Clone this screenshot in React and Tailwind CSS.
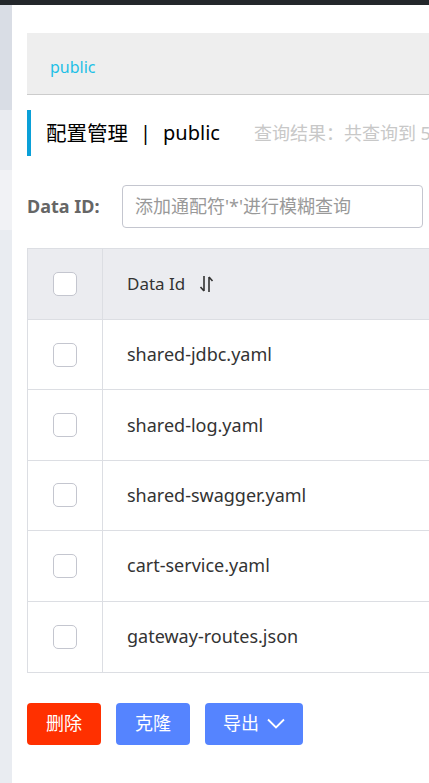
const rows = [
  "shared-jdbc.yaml",
  "shared-log.yaml",
  "shared-swagger.yaml",
  "cart-service.yaml",
  "gateway-routes.json",
];

function Checkbox() {
  return (
    <span className="block w-6 h-6 rounded-[5px] border border-[#c4c6cf] bg-white"></span>
  );
}

function SortIcon() {
  return (
    <svg width="16" height="20" viewBox="0 0 16 20" className="ml-[14px]">
      <path d="M5 2v15M5 17L1.5 13" stroke="#333" strokeWidth="1.6" fill="none" />
      <path d="M10 18V3M10 3l3.5 4" stroke="#333" strokeWidth="1.6" fill="none" />
    </svg>
  );
}

export default function App() {
  return (
    <div
      className="w-[429px] h-[783px] overflow-hidden bg-white flex flex-col"
      style={{ fontFamily: '"Noto Sans", "Noto Sans CJK SC", sans-serif' }}
    >
      <div className="h-[5px] bg-[#23272b] shrink-0"></div>
      <div className="flex flex-1 min-h-0">
        {/* Left strip */}
        <div className="w-3 shrink-0 flex flex-col bg-[#e9ecf1]">
          <div className="h-[105px] bg-[#d9dde5]"></div>
          <div className="h-[60px] bg-[#e9ebf0]"></div>
          <div className="h-[60px] bg-[#f1f2f5]"></div>
        </div>

        {/* Main */}
        <div className="flex-1 min-w-0 pl-[15px] pt-7">
          <div className="h-[62px] bg-[#eeeeee] border-b border-[#cccccc] flex items-center pl-[23px] pt-[7px] w-[600px]">
            <span className="text-[16px] text-[#1ec0e6]">public</span>
          </div>

          <div className="mt-[15px] h-[46px] border-l-4 border-[#0aa0d8] flex items-center pl-[15px] whitespace-nowrap">
            <span className="text-[20.5px] text-black">配置管理</span>
            <span className="text-[20px] text-black mx-[12px]">|</span>
            <span className="text-[20px] text-black">public</span>
            <span className="text-[18px] text-[#c8c8c8] ml-[34px]">查询结果：共查询到 5 条满足要求的配置。</span>
          </div>

          <div className="mt-[29px] flex items-center h-[43px] whitespace-nowrap">
            <span className="text-[18px] font-bold text-[#666666] w-[95px]">Data ID:</span>
            <div className="w-[301px] h-[43px] rounded-[4px] border border-[#c4c6cf] flex items-center px-3">
              <span className="text-[18px] text-[#999999]">添加通配符'*'进行模糊查询</span>
            </div>
          </div>

          <div className="mt-[20px] w-[600px] border border-[#dcdee3] border-r-0">
            <div className="h-[71px] bg-[#ebecf0] flex border-b border-[#dcdee3]">
              <div className="w-[75px] border-r border-[#dcdee3] flex items-center justify-center pr-px">
                <Checkbox />
              </div>
              <div className="flex-1 flex items-center pl-6">
                <span className="text-[17px] text-[#333333]">Data Id</span>
                <SortIcon />
              </div>
            </div>
            {rows.map((name, i) => (
              <div
                key={name}
                className={`h-[70.4px] flex ${i < rows.length - 1 ? "border-b border-[#dcdee3]" : ""}`}
              >
                <div className="w-[75px] border-r border-[#dcdee3] flex items-center justify-center pr-px">
                  <Checkbox />
                </div>
                <div className="flex-1 flex items-center pl-6">
                  <span className="text-[18px] text-[#333333]">{name}</span>
                </div>
              </div>
            ))}
          </div>

          <div className="mt-[30px] flex gap-[15px]">
            <button className="w-[74px] h-[42px] rounded-[4px] bg-[#ff3000] text-white text-[18px]">删除</button>
            <button className="w-[74px] h-[42px] rounded-[4px] bg-[#5584ff] text-white text-[18px]">克隆</button>
            <button className="w-[98px] h-[42px] rounded-[4px] bg-[#5584ff] text-white text-[18px] flex items-center justify-center gap-2">
              导出
              <svg width="18" height="12" viewBox="0 0 18 12">
                <path d="M1 1.5l8 8 8-8" stroke="white" strokeWidth="1.8" fill="none" />
              </svg>
            </button>
          </div>
        </div>
      </div>
    </div>
  );
}
